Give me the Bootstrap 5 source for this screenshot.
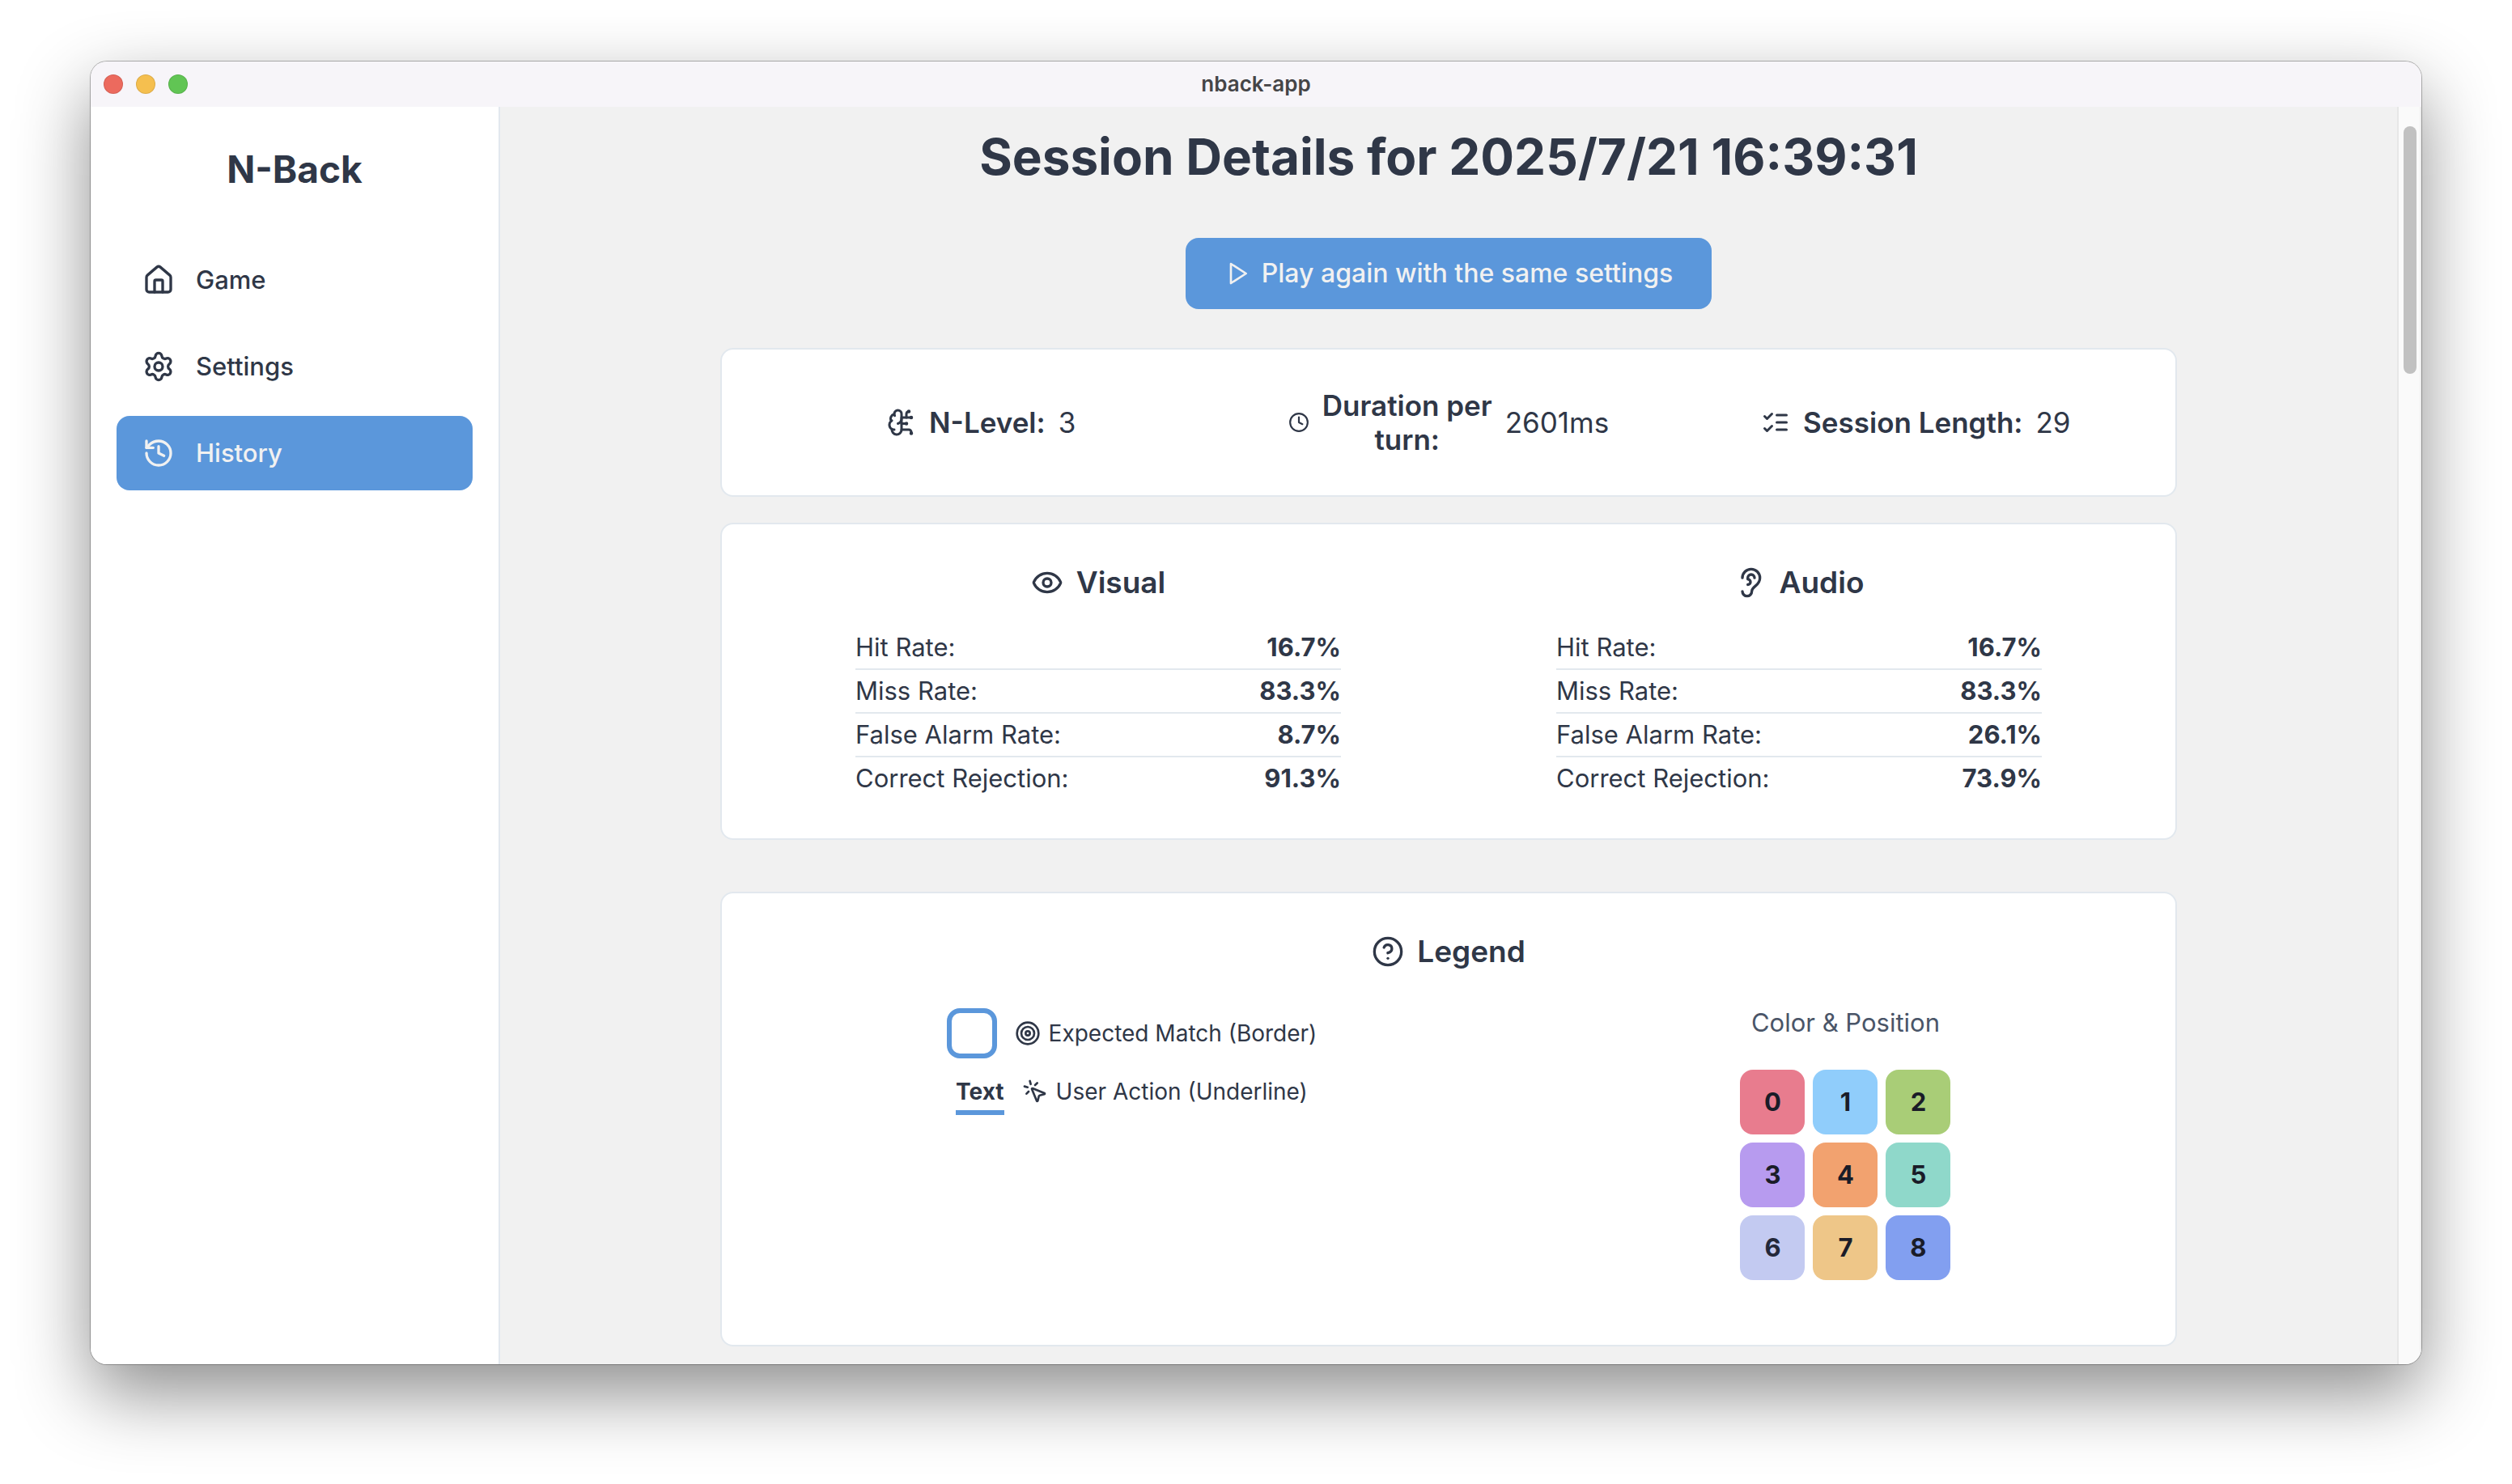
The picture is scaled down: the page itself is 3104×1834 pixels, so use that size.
<!DOCTYPE html>
<html lang="en">
<head>
<meta charset="utf-8">
<meta name="viewport" content="width=device-width, initial-scale=1">
<title>nback-app</title>
<link href="https://cdn.jsdelivr.net/npm/bootstrap@5.3.0/dist/css/bootstrap.min.css" rel="stylesheet">
<style>
  :root { --ink: #2f3747; --line: #e2e8ee; --accent: #5b97db; --paper: #f1f1f1; }
  body { font-family: Inter, "Liberation Sans", sans-serif; font-size: 31px; line-height: 48px; color: var(--ink); background: #fff; padding: 76px 112px 148px; }
  .app-window { border-radius: 20px; box-shadow: 0 0 0 1px rgba(0,0,0,.28), 0 36px 90px rgba(0,0,0,.45); background: var(--paper); }
  .titlebar { height: 56px; background: #f7f5f9; padding: 0 16px; }
  .titlebar-side { flex: 1 1 0; gap: 16px; }
  .titlebar-name { font-size: 26px; font-weight: 600; color: #454547; line-height: 32px; }
  .light { width: 24px; height: 24px; border-radius: 50%; border: 1px solid rgba(0,0,0,.1); }
  .light-close { background: #ec6a5e; } .light-min { background: #f5bf4f; } .light-max { background: #61c554; }
  .sidebar { flex: 0 0 506px; background: #fff; border-right: 2px solid var(--line); padding: 48px 32px; }
  .brand { font-size: 46px; line-height: 58px; font-weight: 700; margin: 0 0 62px; }
  .side-nav { gap: 15px; }
  .side-nav .nav-link { color: var(--ink); font-weight: 500; border-radius: 16px; padding: 22px 32px; gap: 26px; }
  .side-nav .nav-link.active { background: var(--accent); color: var(--paper); }
  .ico { fill: none; stroke: currentColor; stroke-width: 2; stroke-linecap: round; stroke-linejoin: round; flex: none; }
  .ico-40 { width: 40px; height: 40px; } .ico-36 { width: 36px; height: 36px; } .ico-32 { width: 32px; height: 32px; } .ico-26 { width: 26px; height: 26px; }
  .main { padding: 24px 272px 22px; }
  .page-title { font-size: 62px; line-height: 76px; font-weight: 700; margin-bottom: 62px; }
  .btn-replay { --bs-btn-bg: var(--accent); --bs-btn-color: var(--paper); --bs-btn-hover-bg: #4a88cf; --bs-btn-hover-color: #fff; --bs-btn-border-width: 0; --bs-btn-border-radius: 16px; --bs-btn-font-size: 32px; --bs-btn-line-height: 48px; --bs-btn-font-weight: 500; --bs-btn-padding-x: 48px; --bs-btn-padding-y: 20px; gap: 14px; margin-bottom: 48px; }
  .panel { --bs-card-border-color: var(--line); --bs-card-border-width: 2px; --bs-card-border-radius: 16px; --bs-card-inner-border-radius: 14px; --bs-card-spacer-x: 48px; --bs-card-spacer-y: 48px; --bs-card-color: var(--ink); }
  .panel-facts { margin-bottom: 32px; }
  .panel-rates { margin-bottom: 64px; }
  .facts { --bs-gutter-x: 32px; font-size: 35px; line-height: 42px; }
  .fact { gap: 16px; }
  .fact dt { font-weight: 600; }
  .heading { font-size: 37px; line-height: 48px; font-weight: 600; gap: 16px; margin-bottom: 30px; }
  .rates { --bs-gutter-x: 32px; }
  .rate-list { max-width: 600px; }
  .rate-list > div { padding: 2px 0; }
  .rate-list > div + div { border-top: 2px solid var(--line); }
  .legend { gap: 64px; }
  .legend-keys { padding-top: 16px; gap: 12px; font-size: 28px; }
  .key-box { width: 62px; height: 62px; border: 6px solid var(--accent); border-radius: 16px; }
  .key-row { gap: 22px; }
  .key-text { gap: 10px; }
  .key-mark { font-weight: 700; border-bottom: 6px solid var(--accent); line-height: 46px; padding-top: 6px; }
  .tiles-title { color: #4a5568; margin: 10px 0 34px; }
  .tiles { display: grid; grid-template-columns: repeat(3, 80px); grid-auto-rows: 80px; gap: 10px; margin-bottom: 32px; }
  .tile { border-radius: 16px; font-weight: 700; color: #1a1c28; }
  .tile-0 { background: #e87c8e; } .tile-1 { background: #90cdfb; } .tile-2 { background: #a9cd77; }
  .tile-3 { background: #b79bef; } .tile-4 { background: #f2a26f; } .tile-5 { background: #8fd8ca; }
  .tile-6 { background: #c3caf1; color: #23283a; } .tile-7 { background: #eec688; } .tile-8 { background: #829ff0; }
  .track { flex: 0 0 30px; background: #fafafa; border-left: 2px solid #e7e7e7; border-right: 2px solid #efefef; padding: 24px 4px 24px 6px; }
  .thumb { height: 306px; border-radius: 8px; background: #c1c1c1; }
</style>
</head>
<body class="d-flex min-vh-100">
<div class="app-window d-flex flex-column flex-grow-1 overflow-hidden">
  <header class="titlebar d-flex align-items-center">
    <div class="titlebar-side d-flex"><span class="light light-close"></span><span class="light light-min"></span><span class="light light-max"></span></div>
    <span class="titlebar-name">nback-app</span>
    <div class="titlebar-side"></div>
  </header>
  <div class="d-flex flex-grow-1">
    <aside class="sidebar">
      <h2 class="brand text-center">N-Back</h2>
      <nav class="side-nav nav flex-column">
        <a class="nav-link d-flex align-items-center" href="#game"><svg class="ico ico-40" viewBox="0 0 24 24" aria-hidden="true"><path d="M15 21v-8a1 1 0 0 0-1-1h-4a1 1 0 0 0-1 1v8"/><path d="M3 10a2 2 0 0 1 .709-1.528l7-5.999a2 2 0 0 1 2.582 0l7 5.999A2 2 0 0 1 21 10v9a2 2 0 0 1-2 2H5a2 2 0 0 1-2-2z"/></svg><span>Game</span></a>
        <a class="nav-link d-flex align-items-center" href="#settings"><svg class="ico ico-40" viewBox="0 0 24 24" aria-hidden="true"><path d="M9.671 4.136a2.34 2.34 0 0 1 4.659 0 2.34 2.34 0 0 0 3.319 1.915 2.34 2.34 0 0 1 2.33 4.033 2.34 2.34 0 0 0 0 3.831 2.34 2.34 0 0 1-2.33 4.033 2.34 2.34 0 0 0-3.319 1.915 2.34 2.34 0 0 1-4.659 0 2.34 2.34 0 0 0-3.32-1.915 2.34 2.34 0 0 1-2.33-4.033 2.34 2.34 0 0 0 0-3.831A2.34 2.34 0 0 1 6.35 6.051a2.34 2.34 0 0 0 3.319-1.915"/><circle cx="12" cy="12" r="3"/></svg><span>Settings</span></a>
        <a class="nav-link active d-flex align-items-center" href="#history" aria-current="page"><svg class="ico ico-40" viewBox="0 0 24 24" aria-hidden="true"><path d="M3 12a9 9 0 1 0 9-9 9.75 9.75 0 0 0-6.74 2.74L3 8"/><path d="M3 3v5h5"/><path d="M12 7v5l4 2"/></svg><span>History</span></a>
      </nav>
    </aside>
    <main class="main flex-grow-1 text-center">
      <h1 class="page-title">Session Details for 2025/7/21 16:39:31</h1>
      <button type="button" class="btn btn-replay d-inline-flex align-items-center"><svg class="ico ico-32" viewBox="0 0 24 24" aria-hidden="true"><path d="M6 3l14 9-14 9z"/></svg><span>Play again with the same settings</span></button>

      <section class="card panel panel-facts">
        <div class="card-body">
          <div class="row facts">
            <dl class="col fact d-flex justify-content-center align-items-center mb-0"><svg class="ico ico-36" viewBox="0 0 24 24" aria-hidden="true"><path d="M12 5a3 3 0 1 0-5.997.125 4 4 0 0 0-2.526 5.77 4 4 0 0 0 .556 6.588A4 4 0 1 0 12 18Z"/><path d="M9 13a4.5 4.5 0 0 0 3-4"/><path d="M6.003 5.125A3 3 0 0 0 6.401 6.5"/><path d="M3.477 10.896a4 4 0 0 1 .585-.396"/><path d="M6 18a4 4 0 0 1-1.967-.516"/><path d="M12 13h4"/><path d="M12 18h6a2 2 0 0 1 2 2v1"/><path d="M12 8h8"/><path d="M16 8V5a2 2 0 0 1 2-2"/><circle cx="16" cy="13" r=".5"/><circle cx="18" cy="3" r=".5"/><circle cx="20" cy="21" r=".5"/><circle cx="20" cy="8" r=".5"/></svg><dt>N-Level:</dt><dd class="mb-0">3</dd></dl>
            <dl class="col fact d-flex justify-content-center align-items-center mb-0"><svg class="ico ico-26" viewBox="0 0 24 24" aria-hidden="true"><circle cx="12" cy="12" r="10"/><path d="M12 6v6l4 2"/></svg><dt>Duration per<br>turn:</dt><dd class="mb-0">2601ms</dd></dl>
            <dl class="col fact d-flex justify-content-center align-items-center mb-0"><svg class="ico ico-36" viewBox="0 0 24 24" aria-hidden="true"><path d="m3 17 2 2 4-4"/><path d="m3 7 2 2 4-4"/><path d="M13 6h8"/><path d="M13 12h8"/><path d="M13 18h8"/></svg><dt>Session Length:</dt><dd class="mb-0">29</dd></dl>
          </div>
        </div>
      </section>

      <section class="card panel panel-rates">
        <div class="card-body">
          <div class="row rates">
            <div class="col">
              <h3 class="heading d-flex justify-content-center align-items-center"><svg class="ico ico-40" viewBox="0 0 24 24" aria-hidden="true"><path d="M2.062 12.348a1 1 0 0 1 0-.696 10.75 10.75 0 0 1 19.876 0 1 1 0 0 1 0 .696 10.75 10.75 0 0 1-19.876 0"/><circle cx="12" cy="12" r="3"/></svg><span>Visual</span></h3>
              <div class="rate-list mx-auto">
                <div class="d-flex justify-content-between"><span>Hit Rate:</span><strong>16.7%</strong></div>
                <div class="d-flex justify-content-between"><span>Miss Rate:</span><strong>83.3%</strong></div>
                <div class="d-flex justify-content-between"><span>False Alarm Rate:</span><strong>8.7%</strong></div>
                <div class="d-flex justify-content-between"><span>Correct Rejection:</span><strong>91.3%</strong></div>
              </div>
            </div>
            <div class="col">
              <h3 class="heading d-flex justify-content-center align-items-center"><svg class="ico ico-40" viewBox="0 0 24 24" aria-hidden="true"><path d="M6 8.5a6.5 6.5 0 1 1 13 0c0 6-6 6-6 10a3.5 3.5 0 1 1-7 0"/><path d="M15 8.5a2.5 2.5 0 0 0-5 0v1a2 2 0 1 1 0 4"/></svg><span>Audio</span></h3>
              <div class="rate-list mx-auto">
                <div class="d-flex justify-content-between"><span>Hit Rate:</span><strong>16.7%</strong></div>
                <div class="d-flex justify-content-between"><span>Miss Rate:</span><strong>83.3%</strong></div>
                <div class="d-flex justify-content-between"><span>False Alarm Rate:</span><strong>26.1%</strong></div>
                <div class="d-flex justify-content-between"><span>Correct Rejection:</span><strong>73.9%</strong></div>
              </div>
            </div>
          </div>
        </div>
      </section>

      <section class="card panel">
        <div class="card-body">
          <h3 class="heading d-flex justify-content-center align-items-center"><svg class="ico ico-40" viewBox="0 0 24 24" aria-hidden="true"><circle cx="12" cy="12" r="10"/><path d="M9.09 9a3 3 0 0 1 5.83 1c0 2-3 3-3 3"/><path d="M12 17h.01"/></svg><span>Legend</span></h3>
          <div class="legend d-flex">
            <div class="legend-keys flex-fill d-flex flex-column align-items-center">
              <div class="key-row d-flex align-items-center"><span class="key-box"></span><span class="key-text d-flex align-items-center"><svg class="ico ico-32" viewBox="0 0 24 24" aria-hidden="true"><circle cx="12" cy="12" r="10"/><circle cx="12" cy="12" r="6"/><circle cx="12" cy="12" r="2"/></svg><span>Expected Match (Border)</span></span></div>
              <div class="key-row d-flex align-items-center"><span class="key-mark">Text</span><span class="key-text d-flex align-items-center"><svg class="ico ico-32" viewBox="0 0 24 24" aria-hidden="true"><path d="M14 4.1 12 6"/><path d="m5.1 8-2.9-.8"/><path d="m6 12-1.9 2"/><path d="M7.2 2.2 8 5.1"/><path d="M9.037 9.69a.498.498 0 0 1 .653-.653l11 4.5a.5.5 0 0 1-.074.949l-4.349 1.041a1 1 0 0 0-.74.739l-1.04 4.35a.5.5 0 0 1-.95.074z"/></svg><span>User Action (Underline)</span></span></div>
            </div>
            <div class="flex-fill d-flex flex-column align-items-center">
              <div class="tiles-title">Color &amp; Position</div>
              <div class="tiles">
                <span class="tile tile-0 d-flex align-items-center justify-content-center">0</span>
                <span class="tile tile-1 d-flex align-items-center justify-content-center">1</span>
                <span class="tile tile-2 d-flex align-items-center justify-content-center">2</span>
                <span class="tile tile-3 d-flex align-items-center justify-content-center">3</span>
                <span class="tile tile-4 d-flex align-items-center justify-content-center">4</span>
                <span class="tile tile-5 d-flex align-items-center justify-content-center">5</span>
                <span class="tile tile-6 d-flex align-items-center justify-content-center">6</span>
                <span class="tile tile-7 d-flex align-items-center justify-content-center">7</span>
                <span class="tile tile-8 d-flex align-items-center justify-content-center">8</span>
              </div>
            </div>
          </div>
        </div>
      </section>
    </main>
    <div class="track" aria-hidden="true"><div class="thumb"></div></div>
  </div>
</div>
<script src="https://cdn.jsdelivr.net/npm/bootstrap@5.3.0/dist/js/bootstrap.bundle.min.js"></script>
</body>
</html>
